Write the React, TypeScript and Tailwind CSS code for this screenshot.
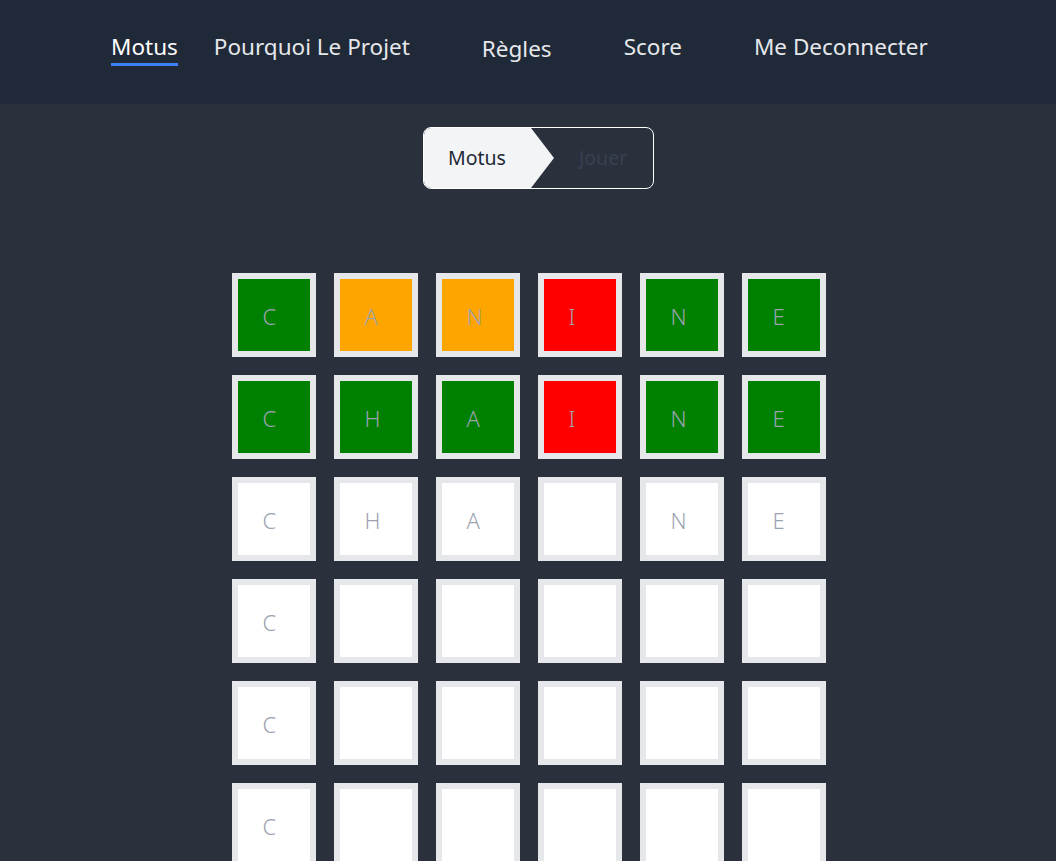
import React from "react";

const ROWS: { l: string; c: "g" | "o" | "r" | "w" }[][] = [
  [
    { l: "C", c: "g" },
    { l: "A", c: "o" },
    { l: "N", c: "o" },
    { l: "I", c: "r" },
    { l: "N", c: "g" },
    { l: "E", c: "g" },
  ],
  [
    { l: "C", c: "g" },
    { l: "H", c: "g" },
    { l: "A", c: "g" },
    { l: "I", c: "r" },
    { l: "N", c: "g" },
    { l: "E", c: "g" },
  ],
  [
    { l: "C", c: "w" },
    { l: "H", c: "w" },
    { l: "A", c: "w" },
    { l: "", c: "w" },
    { l: "N", c: "w" },
    { l: "E", c: "w" },
  ],
  ...[0, 1, 2].map(() => [
    { l: "C", c: "w" as const },
    ...Array.from({ length: 5 }, () => ({ l: "", c: "w" as const })),
  ]),
];

const BG = {
  g: "bg-[#008000]",
  o: "bg-[#ffa500]",
  r: "bg-[#ff0000]",
  w: "bg-white",
};

function Tile({ l, c }: { l: string; c: "g" | "o" | "r" | "w" }) {
  return (
    <div
      className={`w-[84px] h-[84px] border-[6px] border-[#e5e7eb] flex items-center pl-[24.5px] text-[22px] font-light text-[#9ca3af] ${BG[c]}`}
    >
      <span className="mt-[2px]">{l}</span>
    </div>
  );
}

export default function App() {
  return (
    <div
      className="min-h-screen bg-[#2a303c]"
      style={{ fontFamily: '"Noto Sans", "Open Sans", sans-serif' }}
    >
      <header className="h-[104px] bg-[#1f2937] flex items-start pt-[32px] pl-[111px] text-[22.5px] text-[#e5e7eb]">
        <a className="text-white border-b-[3px] border-[#3b82f6] pb-[1px] leading-[30px]">Motus</a>
        <a className="ml-[36px] leading-[30px]">Pourquoi Le Projet</a>
        <a className="ml-[72px] leading-[30px] mt-[2px]">Règles</a>
        <a className="ml-[72px] leading-[30px]">Score</a>
        <a className="ml-[72px] leading-[30px]">Me Deconnecter</a>
      </header>

      <div className="flex justify-center pt-[23px] pl-[21px]">
        <div className="relative w-[231px] h-[62px] rounded-[8px] border border-white overflow-hidden flex items-center text-[19.5px]">
          <div
            className="absolute inset-y-0 left-0 w-[130px] bg-[#f3f4f6]"
            style={{ clipPath: "polygon(0 0, 107px 0, 130px 50%, 107px 100%, 0 100%)" }}
          />
          <span className="relative w-[130px] pl-[24px] text-[#1f2937]">Motus</span>
          <span className="relative pl-[25px] text-[#374151]">Jouer</span>
        </div>
      </div>

      <div className="flex justify-center pt-[84px] pl-[2px]">
        <div className="grid grid-cols-6 gap-[18px]">
          {ROWS.flatMap((row, i) =>
            row.map((t, j) => <Tile key={`${i}-${j}`} l={t.l} c={t.c} />)
          )}
        </div>
      </div>
    </div>
  );
}
